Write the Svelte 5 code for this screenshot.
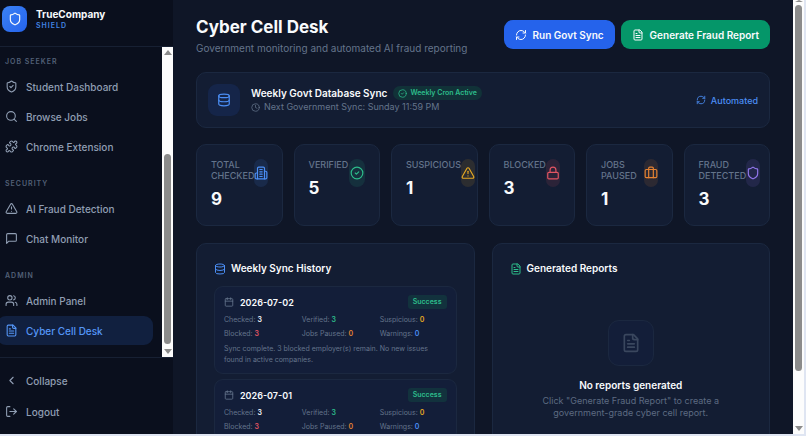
<svelte:options runes={true} />

<script lang="ts">
  type Tone = 'blue' | 'green' | 'amber' | 'red' | 'orange' | 'purple' | 'white'

  const icons: Record<string, string[]> = {
    shield: [
      'M20 13c0 5-3.5 7.5-7.66 8.95a1 1 0 0 1-.67-.01C7.5 20.5 4 18 4 13V6a1 1 0 0 1 1-1c2 0 4.5-1.2 6.24-2.72a1.17 1.17 0 0 1 1.52 0C14.51 3.81 17 5 19 5a1 1 0 0 1 1 1z',
    ],
    shieldCheck: [
      'M20 13c0 5-3.5 7.5-7.66 8.95a1 1 0 0 1-.67-.01C7.5 20.5 4 18 4 13V6a1 1 0 0 1 1-1c2 0 4.5-1.2 6.24-2.72a1.17 1.17 0 0 1 1.52 0C14.51 3.81 17 5 19 5a1 1 0 0 1 1 1z',
      'm9 12 2 2 4-4',
    ],
    search: ['M19 11a8 8 0 1 1-16 0 8 8 0 0 1 16 0z', 'm21 21-4.3-4.3'],
    puzzle: [
      'M15.39 4.39a1 1 0 0 0 1.68-.474 2.5 2.5 0 1 1 3.014 3.015 1 1 0 0 0-.474 1.68l1.683 1.682a2.414 2.414 0 0 1 0 3.414L19.61 15.39a1 1 0 0 1-1.68-.474 2.5 2.5 0 1 0-3.014 3.015 1 1 0 0 1 .474 1.68l-1.683 1.682a2.414 2.414 0 0 1-3.414 0L8.61 19.61a1 1 0 0 0-1.68.474 2.5 2.5 0 1 1-3.014-3.015 1 1 0 0 0 .474-1.68l-1.683-1.682a2.414 2.414 0 0 1 0-3.414L4.39 8.61a1 1 0 0 1 1.68.474 2.5 2.5 0 1 0 3.014-3.015 1 1 0 0 1-.474-1.68l1.683-1.682a2.414 2.414 0 0 1 3.414 0z',
    ],
    alert: [
      'm21.73 18-8-14a2 2 0 0 0-3.48 0l-8 14A2 2 0 0 0 4 21h16a2 2 0 0 0 1.73-3',
      'M12 9v4',
      'M12 17h.01',
    ],
    message: ['M21 15a2 2 0 0 1-2 2H7l-4 4V5a2 2 0 0 1 2-2h14a2 2 0 0 1 2 2z'],
    users: [
      'M16 21v-2a4 4 0 0 0-4-4H6a4 4 0 0 0-4 4v2',
      'M13 7a4 4 0 1 1-8 0 4 4 0 0 1 8 0z',
      'M22 21v-2a4 4 0 0 0-3-3.87',
      'M16 3.13a4 4 0 0 1 0 7.75',
    ],
    file: [
      'M15 2H6a2 2 0 0 0-2 2v16a2 2 0 0 0 2 2h12a2 2 0 0 0 2-2V7z',
      'M14 2v4a2 2 0 0 0 2 2h4',
      'M10 9H8',
      'M16 13H8',
      'M16 17H8',
    ],
    chevron: ['m15 18-6-6 6-6'],
    logout: ['m16 17 5-5-5-5', 'M21 12H9', 'M9 21H5a2 2 0 0 1-2-2V5a2 2 0 0 1 2-2h4'],
    refresh: [
      'M3 12a9 9 0 0 1 9-9 9.75 9.75 0 0 1 6.74 2.74L21 8',
      'M21 3v5h-5',
      'M21 12a9 9 0 0 1-9 9 9.75 9.75 0 0 1-6.74-2.74L3 16',
      'M8 16H3v5',
    ],
    database: [
      'M21 5c0 1.66-4.03 3-9 3S3 6.66 3 5s4.03-3 9-3 9 1.34 9 3z',
      'M3 5v14a9 3 0 0 0 18 0V5',
      'M3 12a9 3 0 0 0 18 0',
    ],
    check: ['M22 12a10 10 0 1 1-20 0 10 10 0 0 1 20 0z', 'm9 12 2 2 4-4'],
    clock: ['M22 12a10 10 0 1 1-20 0 10 10 0 0 1 20 0z', 'M12 6v6l4 2'],
    building: [
      'M6 22V4a2 2 0 0 1 2-2h8a2 2 0 0 1 2 2v18Z',
      'M6 12H4a2 2 0 0 0-2 2v6a2 2 0 0 0 2 2h2',
      'M18 9h2a2 2 0 0 1 2 2v9a2 2 0 0 1-2 2h-2',
      'M10 6h4',
      'M10 10h4',
      'M10 14h4',
      'M10 18h4',
    ],
    lock: [
      'M5 11h14a2 2 0 0 1 2 2v7a2 2 0 0 1-2 2H5a2 2 0 0 1-2-2v-7a2 2 0 0 1 2-2z',
      'M7 11V7a5 5 0 0 1 10 0v4',
    ],
    luggage: [
      'M4 6h16a2 2 0 0 1 2 2v10a2 2 0 0 1-2 2H4a2 2 0 0 1-2-2V8a2 2 0 0 1 2-2z',
      'M16 20V4a2 2 0 0 0-2-2h-4a2 2 0 0 0-2 2v16',
    ],
    calendar: [
      'M8 2v4',
      'M16 2v4',
      'M5 4h14a2 2 0 0 1 2 2v14a2 2 0 0 1-2 2H5a2 2 0 0 1-2-2V6a2 2 0 0 1 2-2z',
      'M3 10h18',
    ],
  }

  const sections = [
    {
      title: 'Job Seeker',
      items: [
        { label: 'Student Dashboard', icon: 'shieldCheck' },
        { label: 'Browse Jobs', icon: 'search' },
        { label: 'Chrome Extension', icon: 'puzzle' },
      ],
    },
    {
      title: 'Security',
      items: [
        { label: 'AI Fraud Detection', icon: 'alert' },
        { label: 'Chat Monitor', icon: 'message' },
      ],
    },
    {
      title: 'Admin',
      items: [
        { label: 'Admin Panel', icon: 'users' },
        { label: 'Cyber Cell Desk', icon: 'file' },
      ],
    },
  ]

  const stats: { label: string; value: number; icon: string; tone: Tone }[] = [
    { label: 'Total Checked', value: 9, icon: 'building', tone: 'blue' },
    { label: 'Verified', value: 5, icon: 'check', tone: 'green' },
    { label: 'Suspicious', value: 1, icon: 'alert', tone: 'amber' },
    { label: 'Blocked', value: 3, icon: 'lock', tone: 'red' },
    { label: 'Jobs Paused', value: 1, icon: 'luggage', tone: 'orange' },
    { label: 'Fraud Detected', value: 3, icon: 'shield', tone: 'purple' },
  ]

  const counts: { label: string; value: number; tone: Tone }[] = [
    { label: 'Checked', value: 3, tone: 'white' },
    { label: 'Verified', value: 3, tone: 'green' },
    { label: 'Suspicious', value: 0, tone: 'amber' },
    { label: 'Blocked', value: 3, tone: 'red' },
    { label: 'Jobs Paused', value: 0, tone: 'orange' },
    { label: 'Warnings', value: 0, tone: 'blue' },
  ]

  const note =
    'Sync complete. 3 blocked employer(s) remain. No new issues found in active companies.'

  const history = [
    { date: '2026-07-02', counts, note },
    { date: '2026-07-01', counts, note: '' },
  ]

  let active = $state('Cyber Cell Desk')
</script>

{#snippet icon(name: string, size: number)}
  <svg
    width={size}
    height={size}
    viewBox="0 0 24 24"
    fill="none"
    stroke="currentColor"
    stroke-width="2"
    stroke-linecap="round"
    stroke-linejoin="round"
    aria-hidden="true"
  >
    {#each icons[name] as d}
      <path {d} />
    {/each}
  </svg>
{/snippet}

{#snippet scrollbar(before: number, thumb: number, after: number)}
  <div class="scrollbar" aria-hidden="true">
    <span class="arrow up"></span>
    <span style:flex-grow={before}></span>
    <span class="thumb" style:flex-grow={thumb}></span>
    <span style:flex-grow={after}></span>
    <span class="arrow down"></span>
  </div>
{/snippet}

<div class="app">
  <aside class="sidebar">
    <div class="brand">
      <div class="logo">{@render icon('shield', 14)}</div>
      <div>
        <div class="name">TrueCompany</div>
        <div class="tag">SHIELD</div>
      </div>
    </div>

    <div class="nav-wrap">
      <nav>
        {#each sections as section}
          <section>
            <h2>{section.title}</h2>
            {#each section.items as item}
              <a
                class="item"
                class:active={active === item.label}
                href="#top"
                onclick={() => (active = item.label)}
              >
                {@render icon(item.icon, 13)}
                {item.label}
              </a>
            {/each}
          </section>
        {/each}
      </nav>
      {@render scrollbar(96, 190, 2)}
    </div>

    <div class="sidebar-footer">
      <button class="item">{@render icon('chevron', 13)} Collapse</button>
      <button class="item">{@render icon('logout', 13)} Logout</button>
    </div>
  </aside>

  <main>
    <header>
      <div>
        <h1>Cyber Cell Desk</h1>
        <p class="lead">Government monitoring and automated AI fraud reporting</p>
      </div>
      <div class="actions">
        <button class="btn sync">{@render icon('refresh', 12)} Run Govt Sync</button>
        <button class="btn report">{@render icon('file', 12)} Generate Fraud Report</button>
      </div>
    </header>

    <div class="card schedule">
      <div class="db-icon">{@render icon('database', 14)}</div>
      <div class="schedule-text">
        <div class="schedule-title">
          Weekly Govt Database Sync
          <span class="pill">{@render icon('check', 9)} Weekly Cron Active</span>
        </div>
        <div class="next">{@render icon('clock', 9)} Next Government Sync: Sunday 11:59 PM</div>
      </div>
      <div class="automated">{@render icon('refresh', 10)} Automated</div>
    </div>

    <div class="stats">
      {#each stats as stat}
        <div class="card stat">
          <div>
            <div class="stat-label">{stat.label}</div>
            <div class="stat-value">{stat.value}</div>
          </div>
          <div class="stat-icon {stat.tone}">{@render icon(stat.icon, 14)}</div>
        </div>
      {/each}
    </div>

    <div class="panels">
      <div class="card panel">
        <h3><span class="blue">{@render icon('database', 12)}</span> Weekly Sync History</h3>
        {#each history as entry}
          <article>
            <div class="entry-head">
              {@render icon('calendar', 10)}
              <span class="date">{entry.date}</span>
              <span class="badge">Success</span>
            </div>
            <div class="counts">
              {#each entry.counts as count}
                <span>{count.label}: <b class={count.tone}>{count.value}</b></span>
              {/each}
            </div>
            {#if entry.note}
              <p>{entry.note}</p>
            {/if}
          </article>
        {/each}
      </div>

      <div class="card panel">
        <h3><span class="green">{@render icon('file', 12)}</span> Generated Reports</h3>
        <div class="empty">
          <div class="empty-icon">{@render icon('file', 20)}</div>
          <h4>No reports generated</h4>
          <p>Click "Generate Fraud Report" to create a government-grade cyber cell report.</p>
        </div>
      </div>
    </div>
  </main>
  {@render scrollbar(0, 365, 52)}
</div>

<style>
  :global(body) {
    background: #dfe5f2;
  }
  .app {
    box-sizing: border-box;
    display: flex;
    height: 100vh;
    padding: 0 2px 2px 0;
    overflow: hidden;
    color: #f8fafc;
    font-family: Inter, 'Liberation Sans', sans-serif;
    font-size: 10px;
  }
  .app * {
    box-sizing: border-box;
  }
  svg {
    display: block;
    flex: none;
  }
  h1,
  h2,
  h3,
  h4,
  p {
    margin: 0;
  }
  button {
    border: 0;
    font-family: inherit;
    cursor: pointer;
  }

  .blue {
    color: #4b8ef5;
  }
  .green {
    color: #2dbd8b;
  }
  .amber {
    color: #e5a823;
  }
  .red {
    color: #e25563;
  }
  .orange {
    color: #e58232;
  }
  .purple {
    color: #9277ec;
  }
  .white {
    color: #f8fafc;
  }

  .scrollbar {
    display: flex;
    flex: none;
    flex-direction: column;
    align-items: center;
    width: 11px;
    padding: 3px 0;
    background: #fcfcfc;
  }
  .thumb {
    width: 7px;
    border-radius: 4px;
    background: #8b8b8b;
  }
  .arrow {
    border: 4px solid transparent;
  }
  .arrow.up {
    border-top: 0;
    border-bottom: 5px solid #8b8b8b;
    margin-bottom: 3px;
  }
  .arrow.down {
    border-bottom: 0;
    border-top: 5px solid #8b8b8b;
    margin-top: 3px;
  }
  .app > .scrollbar {
    padding-top: 0;
  }
  .app > .scrollbar .up {
    border-bottom-width: 2px;
  }

  .sidebar {
    display: flex;
    flex: none;
    flex-direction: column;
    width: 173px;
    overflow: hidden;
    background: #0a0f1d;
  }
  .brand {
    display: flex;
    align-items: center;
    gap: 9px;
    height: 47px;
    padding: 0 0 8px 2px;
    border-bottom: 1px solid #172033;
  }
  .logo {
    display: grid;
    place-items: center;
    width: 25px;
    height: 26px;
    border-radius: 8px;
    background: linear-gradient(135deg, #3b82f6, #2563eb);
  }
  .name {
    font-size: 10px;
    font-weight: 700;
    line-height: 13px;
  }
  .tag {
    color: #4284e4;
    font-size: 7px;
    font-weight: 600;
    line-height: 9px;
    letter-spacing: 1px;
  }
  .nav-wrap {
    display: flex;
    flex: 1;
    min-height: 0;
  }
  nav {
    flex: 1;
    padding: 9px 9px 0 0;
  }
  section {
    display: flex;
    flex-direction: column;
    gap: 1px;
    margin-bottom: 17px;
  }
  section:last-child {
    margin-bottom: 0;
  }
  h2 {
    margin-bottom: 3px;
    padding-left: 5px;
    color: #526077;
    font-size: 7px;
    font-weight: 600;
    line-height: 12px;
    letter-spacing: 1px;
    text-transform: uppercase;
  }
  .item {
    display: flex;
    align-items: center;
    gap: 8px;
    height: 29px;
    margin-left: -3px;
    padding: 0 8px;
    border-radius: 9px;
    background: none;
    color: #909eb3;
    font-size: 10px;
    font-weight: 500;
    text-decoration: none;
  }
  .item.active {
    background: #11203f;
    color: #5596f7;
  }
  .sidebar-footer {
    display: flex;
    flex-direction: column;
    gap: 2px;
    padding: 8px 0;
    border-top: 1px solid #172033;
  }

  main {
    flex: 1;
    min-width: 0;
    padding: 16px 23px 0;
    overflow: hidden;
    background: #0f1627;
  }
  header {
    display: flex;
    align-items: center;
    justify-content: space-between;
    margin-bottom: 16px;
  }
  h1 {
    font-size: 17px;
    font-weight: 700;
    line-height: 22px;
  }
  .lead {
    margin-top: 2px;
    color: #64748b;
    font-size: 10px;
    line-height: 16px;
  }
  .actions {
    display: flex;
    gap: 6px;
    margin-bottom: 3px;
  }
  .btn {
    display: flex;
    align-items: center;
    gap: 6px;
    height: 29px;
    padding: 0 11px;
    border-radius: 9px;
    color: #f8fafc;
    font-size: 10px;
    font-weight: 600;
    white-space: nowrap;
  }
  .sync {
    background: #2563eb;
  }
  .report {
    background: #059669;
  }

  .card {
    border: 1px solid #1b2840;
    border-radius: 10px;
    background: #131d33;
  }
  .schedule {
    display: flex;
    align-items: center;
    gap: 11px;
    height: 56px;
    margin-bottom: 16px;
    padding: 0 11px;
  }
  .db-icon {
    display: grid;
    place-items: center;
    width: 32px;
    height: 32px;
    border-radius: 9px;
    background: #152549;
    color: #4b8ef5;
  }
  .schedule-text {
    flex: 1;
  }
  .schedule-title {
    display: flex;
    align-items: center;
    gap: 6px;
    font-size: 10px;
    font-weight: 600;
    line-height: 14px;
  }
  .pill {
    display: flex;
    align-items: center;
    gap: 3px;
    padding: 0 5px;
    border-radius: 8px;
    background: #113238;
    color: #2dbd8b;
    font-size: 7px;
  }
  .next {
    display: flex;
    align-items: center;
    gap: 4px;
    color: #64748b;
    font-size: 9px;
    line-height: 14px;
  }
  .automated {
    display: flex;
    align-items: center;
    gap: 5px;
    color: #4b8ef5;
    font-size: 9px;
    font-weight: 500;
  }

  .stats {
    display: grid;
    grid-template-columns: repeat(6, minmax(0, 1fr));
    gap: 11px;
    margin-bottom: 17px;
  }
  .stat {
    display: flex;
    align-items: flex-start;
    justify-content: space-between;
    height: 82px;
    padding: 14px;
  }
  .stat-label {
    color: #64748b;
    font-size: 9px;
    font-weight: 500;
    line-height: 11px;
    text-transform: uppercase;
  }
  .stat-value {
    margin-top: 7px;
    font-size: 17px;
    font-weight: 700;
    line-height: 22px;
  }
  .stat-icon {
    display: flex;
    justify-content: center;
    width: 16px;
    min-width: 14px;
    padding: 7px 0;
    border-radius: 8px;
    background: color-mix(in srgb, currentColor 12%, transparent);
  }

  .panels {
    display: grid;
    grid-template-columns: repeat(2, minmax(0, 1fr));
    gap: 17px;
  }
  .panel {
    padding: 17px 17px 24px;
  }
  h3 {
    display: flex;
    align-items: center;
    gap: 5px;
    margin-bottom: 10px;
    font-size: 10px;
    font-weight: 600;
    line-height: 15px;
  }
  article {
    margin-bottom: 5px;
    padding: 8px 9px;
    border: 1px solid #1b2840;
    border-radius: 9px;
    background: #131e39;
    color: #64748b;
  }
  .entry-head {
    display: flex;
    align-items: center;
    gap: 6px;
    margin-bottom: 5px;
  }
  .date {
    flex: 1;
    color: #f8fafc;
    font-size: 9px;
    font-weight: 600;
  }
  .badge {
    padding: 0 5px;
    border-radius: 3px;
    background: #12323d;
    color: #2dbd8b;
    font-size: 7px;
    font-weight: 600;
    line-height: 14px;
  }
  .counts {
    display: grid;
    grid-template-columns: repeat(3, minmax(0, 1fr));
    gap: 3px 11px;
    font-size: 7px;
    line-height: 11px;
    white-space: nowrap;
  }
  .counts b {
    font-weight: 600;
  }
  article p {
    margin-top: 4px;
    font-size: 7px;
    line-height: 11px;
  }

  .empty {
    display: flex;
    flex-direction: column;
    align-items: center;
    padding-top: 34px;
    text-align: center;
  }
  .empty-icon {
    display: grid;
    place-items: center;
    width: 46px;
    height: 46px;
    margin-bottom: 11px;
    border: 1px solid #1b2840;
    border-radius: 11px;
    background: #131e39;
    color: #3a475e;
  }
  h4 {
    margin-bottom: 2px;
    font-size: 10px;
    font-weight: 600;
    line-height: 16px;
  }
  .empty p {
    max-width: 200px;
    color: #5d6b82;
    font-size: 9px;
    line-height: 12px;
  }
</style>
